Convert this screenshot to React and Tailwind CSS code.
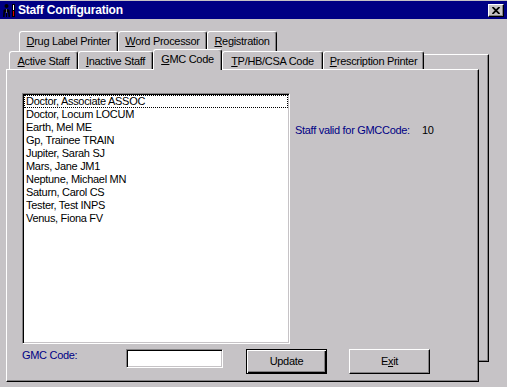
import React from "react";

const U = ({ children }) => (
  <span className="underline underline-offset-[1px] decoration-1">{children}</span>
);

const items = [
  "Doctor, Associate ASSOC",
  "Doctor, Locum LOCUM",
  "Earth, Mel ME",
  "Gp, Trainee TRAIN",
  "Jupiter, Sarah SJ",
  "Mars, Jane JM1",
  "Neptune, Michael MN",
  "Saturn, Carol CS",
  "Tester, Test INPS",
  "Venus, Fiona FV",
];

function BackTab({ className, children }) {
  return (
    <div
      className={
        "flex h-[20px] items-center justify-center rounded-t-[3px] border-l border-r border-t border-l-white border-t-white border-r-black bg-[#c6c3c6] shadow-[inset_-1px_0_#848284] " +
        className
      }
    >
      {children}
    </div>
  );
}

function FrontTab({ className, children }) {
  return (
    <div
      className={
        "flex h-[18px] items-center justify-center rounded-t-[3px] border-l border-r border-t border-l-white border-t-white border-r-black bg-[#c6c3c6] pt-[2px] shadow-[inset_-1px_0_#848284] " +
        className
      }
    >
      {children}
    </div>
  );
}

export default function App() {
  return (
    <div className="relative h-[387px] w-[507px] overflow-hidden bg-[#c6c3c6] font-['Liberation_Sans',Arial,sans-serif] text-[11px] leading-[13px] tracking-[-0.3px] text-black">
      {/* Title bar */}
      <div className="border-t border-t-[#c6c3c6]">
        <div className="flex h-[18px] items-center bg-[#000084] pl-[2px] pr-[3px]">
          <svg width="14" height="15" viewBox="0 0 14 15" className="shrink-0">
            <circle cx="4.5" cy="3" r="2" fill="#000" />
            <path d="M1 14 L1.5 7 Q4.5 5 7.5 7 L8 14 L6.5 14 L6 9 L5 9 L5 14 L4 14 L4 9 L3 9 L2.5 14 Z" fill="#000" />
            <path d="M4.5 6 L4.5 10" stroke="#888" strokeWidth="0.8" />
            <rect x="10" y="1" width="3" height="13" fill="#000" />
            <rect x="11" y="2" width="1" height="5" fill="#fff" />
            <rect x="11" y="8" width="1" height="5" fill="#e00000" />
          </svg>
          <span className="ml-[2px] text-[12px] font-bold tracking-[-0.2px] text-white">
            Staff Configuration
          </span>
          <div className="ml-auto flex h-[13px] w-[16px] items-center justify-center border border-b-black border-l-white border-r-black border-t-white bg-[#c6c3c6] shadow-[inset_-1px_-1px_#848284]">
            <svg width="8" height="7" viewBox="0 0 8 7">
              <path d="M0.5 0 L7.5 7 M7.5 0 L0.5 7" stroke="#000" strokeWidth="1.8" />
            </svg>
          </div>
        </div>
      </div>

      {/* Back page of the tab control (lies behind the front page) */}
      <div className="absolute left-[16px] top-[54px] h-[308px] w-[473px] border-b border-r border-t border-b-black border-r-black border-t-white shadow-[inset_-1px_-1px_#848284]" />

      {/* Tab control */}
      <div className="relative pt-[12px]">
        {/* back row */}
        <div className="flex pl-[19px]">
          <BackTab className="w-[99px]">
            <span><U>D</U>rug Label Printer</span>
          </BackTab>
          <BackTab className="w-[89px]">
            <span><U>W</U>ord Processor</span>
          </BackTab>
          <BackTab className="w-[70px]">
            <span><U>R</U>egistration</span>
          </BackTab>
        </div>

        {/* front row */}
        <div className="relative z-20 flex h-[18px] items-end pl-[9px]">
          <FrontTab className="w-[69px]">
            <span><U>A</U>ctive Staff</span>
          </FrontTab>
          <FrontTab className="w-[75px]">
            <span><U>I</U>nactive Staff</span>
          </FrontTab>
          <div className="mb-[-1px] flex h-[21px] w-[69px] items-center justify-center rounded-t-[3px] border-l border-r border-t border-l-white border-t-white border-r-black bg-[#c6c3c6] pb-[1px] shadow-[inset_-1px_0_#848284]">
            <span><U>G</U>MC Code</span>
          </div>
          <FrontTab className="w-[101px]">
            <span><U>T</U>P/HB/CSA Code</span>
          </FrontTab>
          <FrontTab className="w-[101px]">
            <span><U>P</U>rescription Printer</span>
          </FrontTab>
        </div>

        {/* front page */}
        <div className="relative z-10 ml-[6px] h-[313px] w-[473px] border border-b-black border-l-white border-r-black border-t-white bg-[#c6c3c6] pl-[15px] pt-[23px] shadow-[inset_-1px_-1px_#848284]">
          <div className="flex">
            <div className="h-[251px] w-[268px] shrink-0 border border-b-white border-l-[#848284] border-r-white border-t-[#848284] bg-white p-[1px] shadow-[inset_1px_1px_#000,inset_-1px_-1px_#c6c3c6]">
              {items.map((it, i) => (
                <div
                  key={it}
                  className={
                    i === 0
                      ? "h-[13px] whitespace-nowrap border border-dotted border-black pl-[1px] leading-[11px]"
                      : "h-[13px] whitespace-nowrap pl-[2px]"
                  }
                >
                  {it}
                </div>
              ))}
            </div>
            <div className="ml-[5px] mt-[31px] flex">
              <span className="w-[127px] text-[#000084]">Staff valid for GMCCode:</span>
              <span>10</span>
            </div>
          </div>

          <div className="mt-[5px] flex items-start">
            <span className="w-[104px] text-[#000084]">GMC Code:</span>
            <div className="h-[19px] w-[97px] border border-b-white border-l-[#848284] border-r-white border-t-[#848284] bg-white shadow-[inset_1px_1px_#000,inset_-1px_-1px_#c6c3c6]" />
            <div className="ml-[23px] flex h-[25px] w-[81px] items-center justify-center border border-black shadow-[inset_1px_1px_#fff,inset_-1px_-1px_#000,inset_-2px_-2px_#848284]">
              Update
            </div>
            <div className="ml-[22px] flex h-[25px] w-[81px] items-center justify-center border border-b-black border-l-white border-r-black border-t-white shadow-[inset_-1px_-1px_#848284]">
              <span>E<U>x</U>it</span>
            </div>
          </div>
        </div>
      </div>
    </div>
  );
}
